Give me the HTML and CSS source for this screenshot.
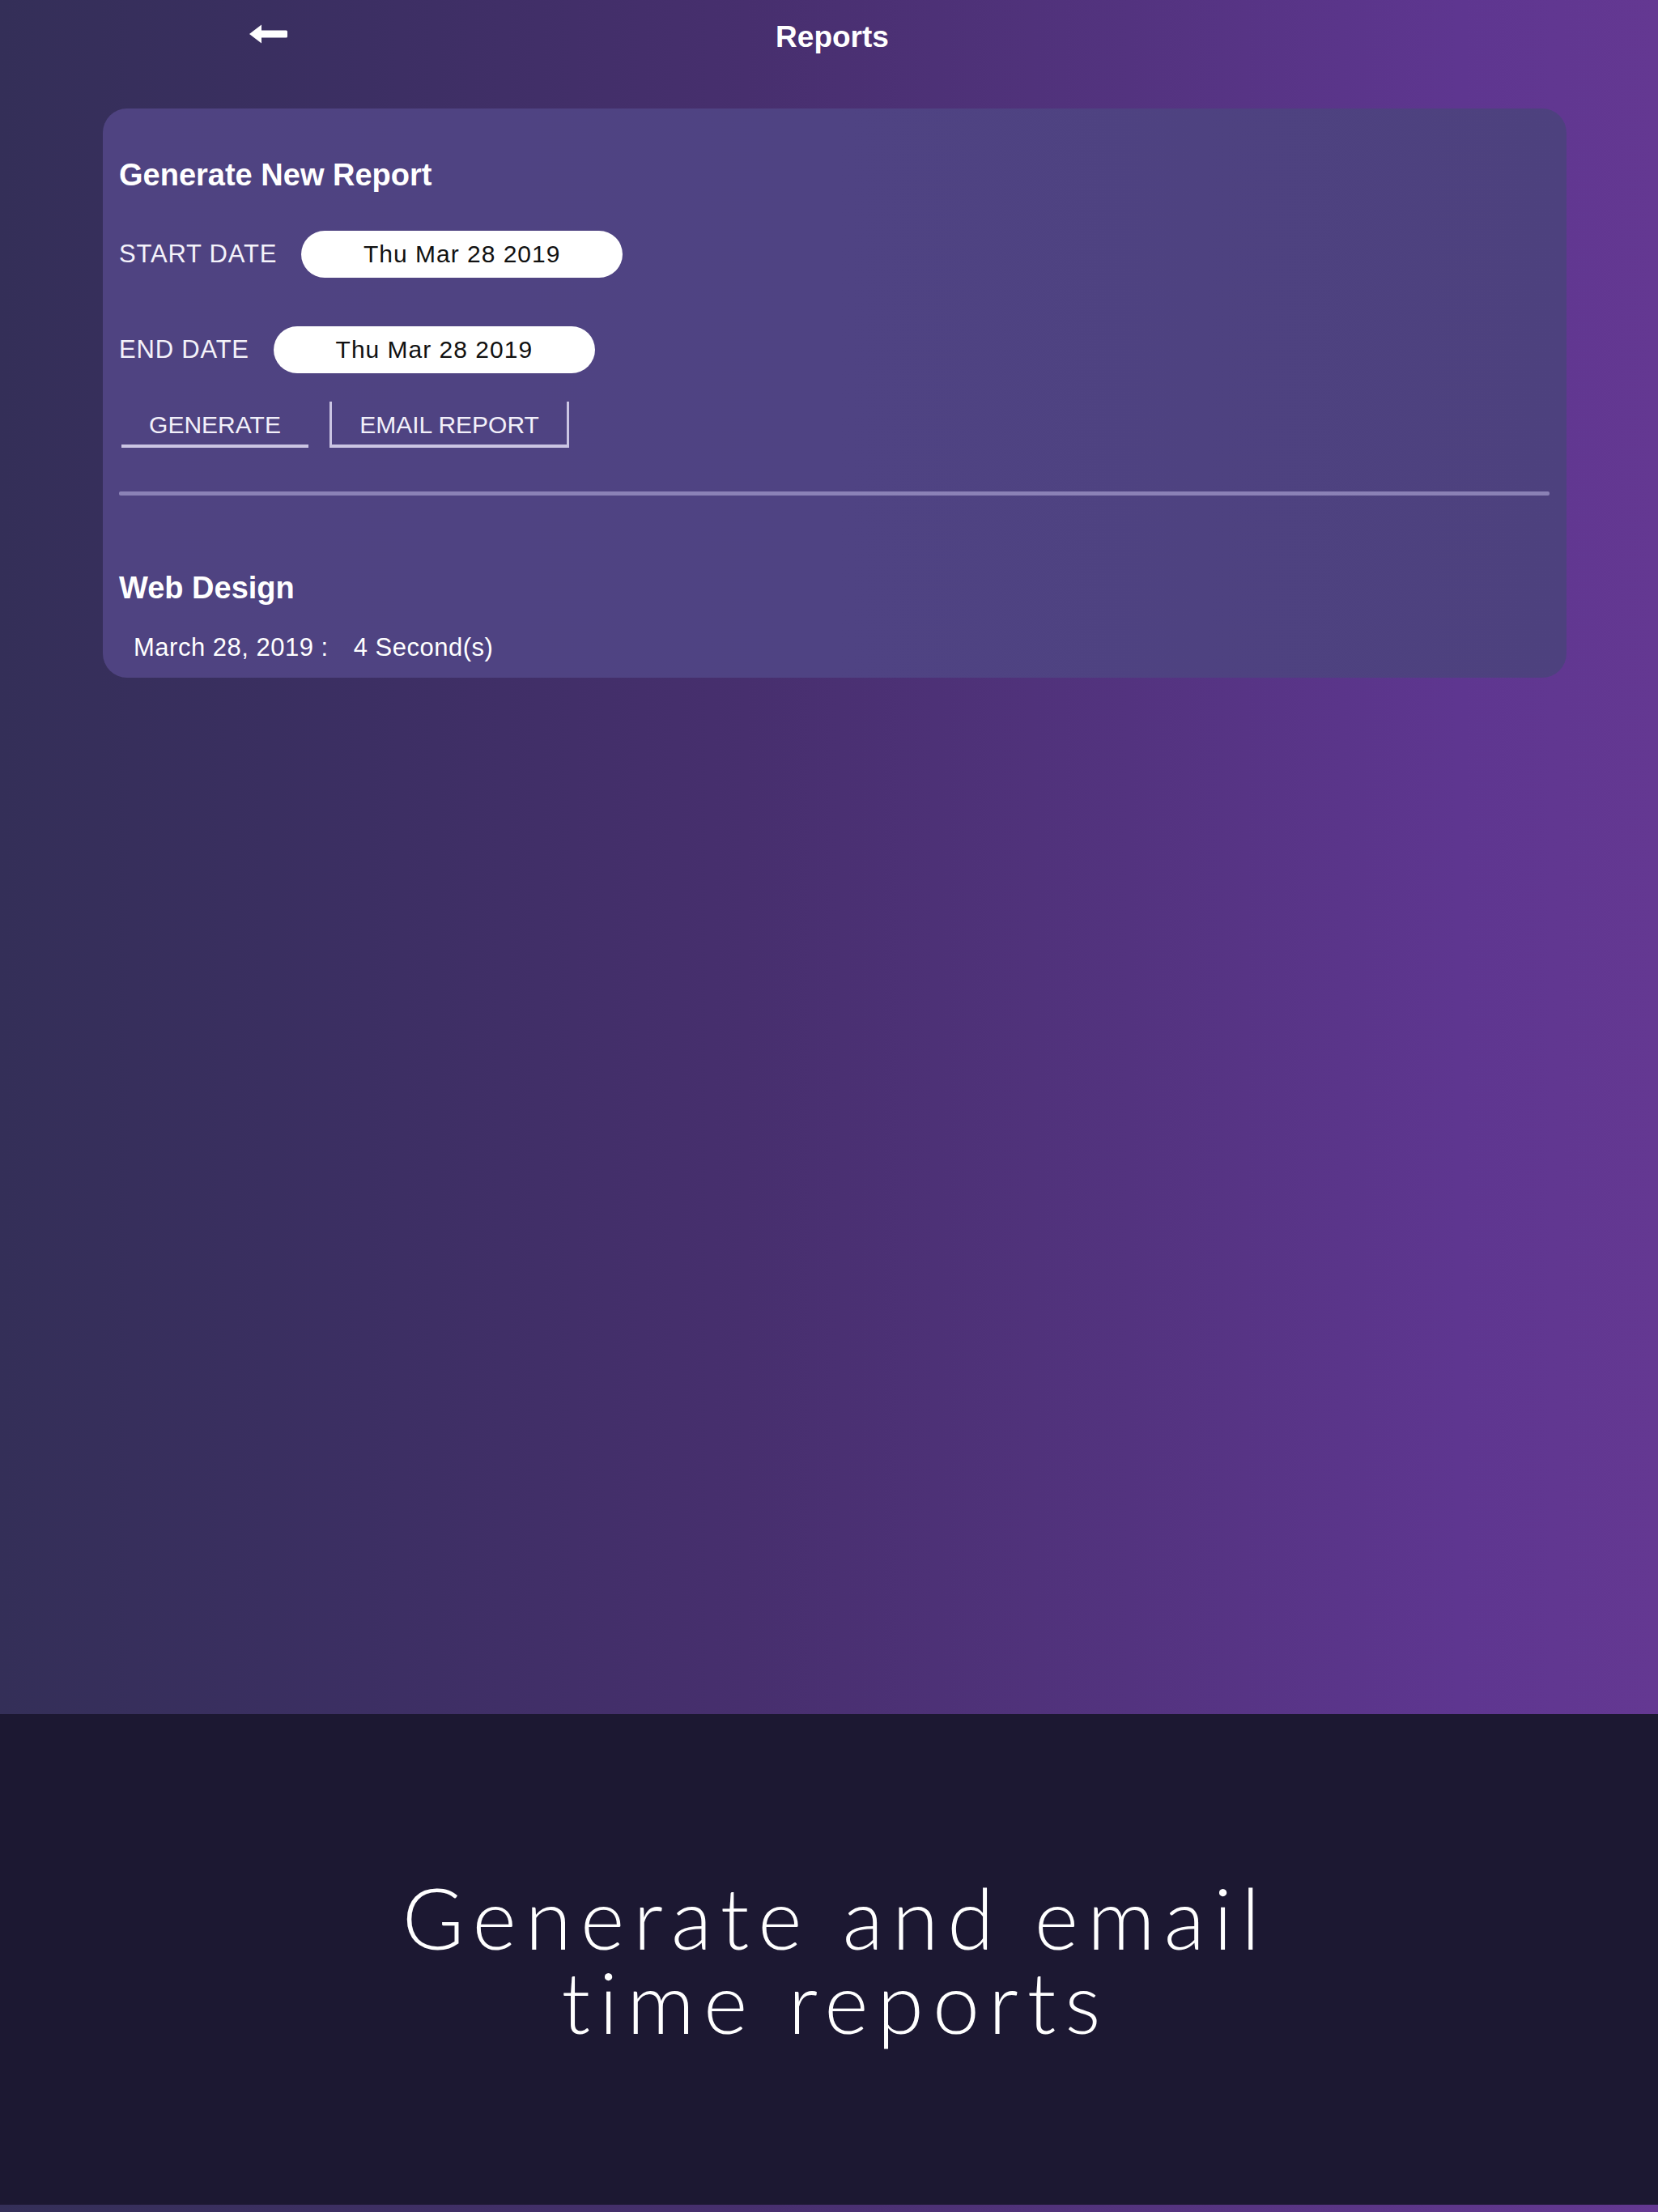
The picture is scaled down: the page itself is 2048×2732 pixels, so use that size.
FILE: index.html
```html
<!DOCTYPE html>
<html lang="en">
<head>
<meta charset="utf-8">
<title>Reports</title>
<link rel="stylesheet" href="styles.css">
</head>
<body>
<div class="page">
  <section class="screen">
    <header class="topbar">
      <div class="back">
        <svg class="back-icon" width="48" height="24" viewBox="0 0 48 24">
          <polygon points="0,12 15,0.5 15,23.5" fill="#ffffff"/>
          <rect x="13" y="7.5" width="34" height="9" rx="1.5" fill="#ffffff"/>
        </svg>
      </div>
      <h1 class="title">Reports</h1>
      <div class="spacer"></div>
    </header>

    <div class="card">
      <h2 class="card-title">Generate New Report</h2>
      <div class="date-row first">
        <span class="date-label">START DATE</span>
        <span class="pill">Thu Mar 28 2019</span>
      </div>
      <div class="date-row second">
        <span class="date-label">END DATE</span>
        <span class="pill">Thu Mar 28 2019</span>
      </div>
      <div class="actions">
        <button class="btn btn-generate">GENERATE</button>
        <button class="btn btn-email">EMAIL REPORT</button>
      </div>
      <div class="divider"></div>
      <h3 class="project">Web Design</h3>
      <div class="entry">
        <span>March 28, 2019 :</span>
        <span>4 Second(s)</span>
      </div>
    </div>
  </section>

  <section class="caption">
    <p class="caption-text"><span class="caption-line">Generate and email</span><span class="caption-line">time reports</span></p>
  </section>
  <div class="strip"></div>
</div>
</body>
</html>
```

FILE: styles.css
```css
* { box-sizing: border-box; }

html, body {
  margin: 0;
  padding: 0;
}

body {
  width: 2048px;
  height: 2732px;
  overflow: hidden;
  font-family: "Liberation Sans", Arial, sans-serif;
  color: #ffffff;
  background: #1c1832;
}

.page {
  display: flex;
  flex-direction: column;
  width: 2048px;
  height: 2732px;
}

.screen {
  height: 2117px;
  background: linear-gradient(90deg, #342f58 0%, #3c2f63 22%, #472f6e 45%, #53337f 68%, #5e3690 88%, #643892 100%);
}

.topbar {
  height: 134px;
  display: grid;
  grid-template-columns: 1fr auto 1fr;
  align-items: start;
}

.back {
  padding-left: 308px;
  padding-top: 30px;
}

.back-icon { display: block; }

.title {
  margin: 0;
  padding-top: 24px;
  padding-left: 8px;
  font-size: 37px;
  line-height: 44px;
  font-weight: 700;
}

.card {
  margin: 0 113px 0 127px;
  height: 703px;
  border-radius: 30px;
  background: linear-gradient(90deg, #4f4381 0%, #4f4383 50%, #4d417e 100%);
  padding: 60px 21px 18px 20px;
}

.card-title {
  margin: 0;
  font-size: 38px;
  line-height: 44px;
  font-weight: 700;
}

.date-row {
  display: flex;
  align-items: center;
  gap: 30px;
}

.date-row.first { margin-top: 47px; }
.date-row.second { margin-top: 60px; }

.date-label {
  font-size: 31px;
  line-height: 36px;
  letter-spacing: 0.8px;
  color: #f4f2fa;
}

.pill {
  width: 397px;
  height: 58px;
  border-radius: 29px;
  background: #ffffff;
  color: #111111;
  font-size: 30px;
  letter-spacing: 1px;
  display: flex;
  align-items: center;
  justify-content: center;
}

.actions {
  display: flex;
  gap: 26px;
  margin-top: 35px;
  padding-left: 3px;
}

.btn {
  font-family: "Liberation Sans", Arial, sans-serif;
  font-size: 30px;
  color: #f2f0fa;
  background: transparent;
  height: 57px;
  padding: 0;
  border: 0 solid rgba(225, 220, 245, 0.85);
  border-bottom-width: 4px;
  display: flex;
  align-items: center;
  justify-content: center;
  padding-top: 4px;
}

.btn-generate { width: 231px; }

.btn-email {
  width: 296px;
  border-left-width: 3px;
  border-right-width: 3px;
}

.divider {
  margin-top: 54px;
  height: 5px;
  border-radius: 2px;
  background: rgba(190, 182, 225, 0.55);
}

.project {
  margin: 92px 0 0 0;
  font-size: 38px;
  line-height: 44px;
  font-weight: 700;
}

.entry {
  margin-top: 34px;
  margin-left: 18px;
  display: flex;
  gap: 31px;
  font-size: 31px;
  line-height: 36px;
  letter-spacing: 0.5px;
}

.caption {
  height: 606px;
  background: #1c1832;
  display: flex;
  align-items: center;
  justify-content: center;
}

.caption-text {
  margin: 0;
  display: flex;
  flex-direction: column;
  align-items: center;
  font-family: "Lato", "Open Sans", sans-serif;
  font-weight: 300;
  font-size: 104px;
  line-height: 104px;
  letter-spacing: 11px;
  color: #ffffff;
  padding-left: 16px;
}

.caption-line {
  display: block;
  white-space: nowrap;
}

.strip {
  height: 9px;
  background: linear-gradient(90deg, #342f58 0%, #472f6e 45%, #643892 100%);
}
```
